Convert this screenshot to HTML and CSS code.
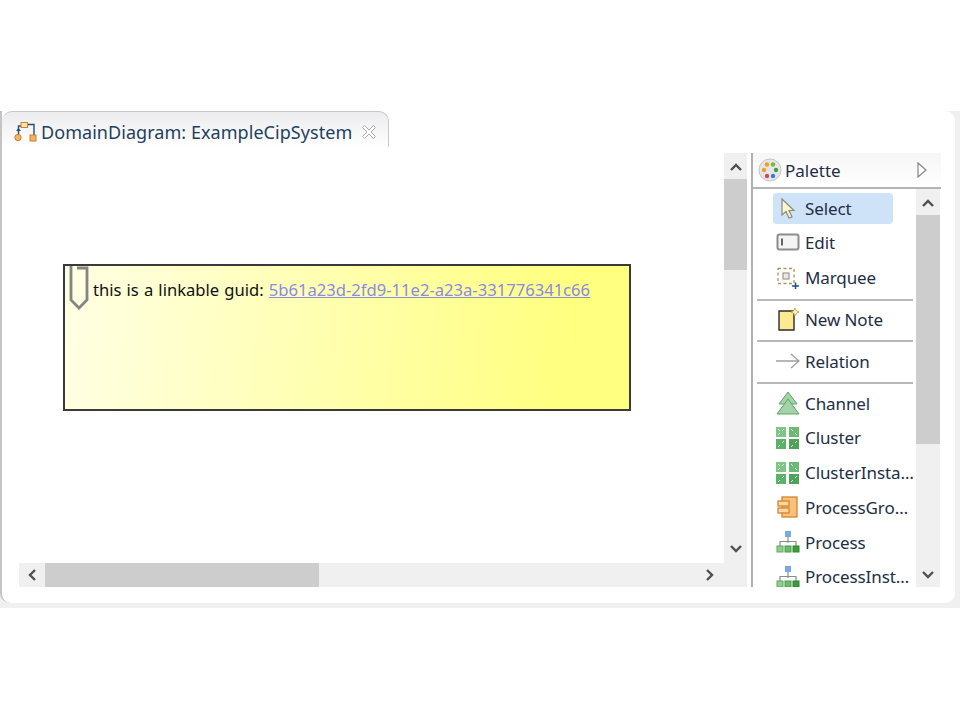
FILE: index.html
```html
<!DOCTYPE html>
<html lang="en">
<head>
<meta charset="utf-8">
<title>DomainDiagram: ExampleCipSystem</title>
<link rel="stylesheet" href="styles.css">
</head>
<body>
<div class="frame">
  <div class="tabbar">
    <div class="tab">
      <svg class="tab-icon" width="24" height="24" viewBox="0 0 24 24" fill="none"><path d="M5.500 14V6H8M14 4.500H21V16" stroke="#22507a" stroke-width="1.400"/><path d="M3 11L5.500 8L8 11Z" fill="#22507a"/><rect x="8" y="2.500" width="6.500" height="5" fill="#fbe3b4" stroke="#c8832c"/><circle cx="5" cy="17.500" r="3.200" fill="#f2b266" stroke="#c8832c"/><rect x="17" y="15" width="6" height="6" fill="#f2b266" stroke="#c8832c"/></svg>
      <span class="tab-title">DomainDiagram: ExampleCipSystem</span>
      <svg class="tab-close" width="16" height="16" viewBox="0 0 16 16" fill="#fff" stroke="#a8a8a8"><path d="M1.500 3.500L3.500 1.500L8 6L12.500 1.500L14.500 3.500L10 8L14.500 12.500L12.500 14.500L8 10L3.500 14.500L1.500 12.500L6 8Z"/></svg>
    </div>
  </div>
  <div class="workspace">
    <div class="editor">
      <div class="canvas-row">
        <div class="canvas">
          <div class="note">
            <svg class="clip" width="20" height="48" viewBox="0 0 20 48" fill="none"><path d="M2 0V34L10 42L18 34V2H8" stroke="#858585" stroke-width="2.800"/></svg>
            <p class="note-text">this is a linkable guid: <a class="guid" href="#">5b61a23d-2fd9-11e2-a23a-331776341c66</a></p>
          </div>
        </div>
        <div class="vscroll editor-v">
          <svg class="arrow" width="12" height="8" viewBox="0 0 12 8" fill="none"><path d="M1 7L6 2L11 7" stroke="#505050" stroke-width="2.400"/></svg>
          <div class="thumb-v editor-thumb"></div>
          <div class="spacer"></div>
          <svg class="arrow" width="12" height="8" viewBox="0 0 12 8" fill="none"><path d="M1 1L6 6L11 1" stroke="#505050" stroke-width="2.400"/></svg>
        </div>
      </div>
      <div class="hscroll">
        <svg class="arrow-h" width="8" height="12" viewBox="0 0 8 12" fill="none"><path d="M7 1L2 6L7 11" stroke="#505050" stroke-width="2.400"/></svg>
        <div class="thumb-h"></div>
        <div class="spacer"></div>
        <svg class="arrow-h" width="8" height="12" viewBox="0 0 8 12" fill="none"><path d="M1 1L6 6L1 11" stroke="#505050" stroke-width="2.400"/></svg>
      </div>
    </div>
    <aside class="palette">
      <header class="palette-head">
        <svg class="palette-icon" width="24" height="24" viewBox="0 0 24 24"><circle cx="12" cy="12" r="11" fill="#e6e6ea" stroke="#c5c5cc"/><circle cx="9" cy="6.500" r="2.200" fill="#f0a020"/><circle cx="15" cy="6.500" r="2.200" fill="#7cb82a"/><circle cx="18" cy="12" r="2.200" fill="#3aa040"/><circle cx="6" cy="12" r="2.200" fill="#f0a020"/><circle cx="9" cy="18" r="2.200" fill="#d84a4a"/><circle cx="15" cy="18" r="2.200" fill="#3a7ad8"/></svg>
        <span class="palette-title">Palette</span>
        <svg class="collapse" width="10" height="16" viewBox="0 0 10 16" fill="#fff" stroke="#858585" stroke-width="1.200"><path d="M1 1L9 8L1 15Z"/></svg>
      </header>
      <div class="palette-body">
        <ul class="tools">
          <li class="tool selected"><span class="ico"><svg width="24" height="24" viewBox="0 0 24 24"><path d="M6 2V18L10 14.500L13 21L16 20L13 13.500H18Z" fill="#fbf6d0" stroke="#8a8a7a" stroke-width="1.200"/></svg></span>Select</li>
          <li class="tool"><span class="ico"><svg width="24" height="24" viewBox="0 0 24 24" fill="none"><rect x="1.500" y="3.500" width="21" height="15" rx="2" fill="#f4f4f4" stroke="#8c8c8c" stroke-width="2"/><path d="M6 7.500V14.500" stroke="#333" stroke-width="1.500"/></svg></span>Edit</li>
          <li class="tool"><span class="ico"><svg width="24" height="24" viewBox="0 0 24 24" fill="none"><rect x="2" y="2.500" width="16" height="15" stroke="#a89660" stroke-width="1.300" stroke-dasharray="3 2.500"/><rect x="7" y="7" width="6" height="6" fill="#efeadb" stroke="#999" stroke-width="1.200"/><path d="M19.500 16.500V23M16 20H23" stroke="#1f4f80" stroke-width="1.500"/></svg></span>Marquee</li>
          <li class="sep"></li>
          <li class="tool"><span class="ico"><svg width="24" height="24" viewBox="0 0 24 24"><path d="M3 3H18V22H3Z" fill="#fde98f" stroke="#2c2c2c" stroke-width="1.400"/><path d="M19 0L20.300 2.700L23 4L20.300 5.300L19 8L17.700 5.300L15 4L17.700 2.700Z" fill="#fff3c0" stroke="#c89a30" stroke-width="0.800"/></svg></span>New Note</li>
          <li class="sep"></li>
          <li class="tool"><span class="ico"><svg width="24" height="24" viewBox="0 0 24 24" fill="none"><path d="M0 12H23M15 5L23 12L15 19" stroke="#a0a0a0" stroke-width="1.400"/></svg></span>Relation</li>
          <li class="sep"></li>
          <li class="tool"><span class="ico"><svg width="24" height="24" viewBox="0 0 24 24"><path d="M12 1L21 13H3Z" fill="#a3d3a6" stroke="#5ba765"/><path d="M12 8L23 23H1Z" fill="#a3d3a6" stroke="#5ba765"/></svg></span>Channel</li>
          <li class="tool"><span class="ico"><svg width="24" height="24" viewBox="0 0 24 24" fill="#5cb067"><rect x="0" y="1" width="10" height="10" fill="#7fc587"/><rect x="13" y="1" width="10" height="10" fill="#6cb975"/><rect x="0" y="13" width="10" height="10"/><rect x="13" y="13" width="10" height="10" fill="#4fa25a"/><path d="M2 3L4 5M8 3L6 5M2 9L4 7M15 3L17 5M21 9L19 7M2 21L4 19M8 15L6 17M15 21L17 19M21 15L19 17" stroke="#d8f0da" stroke-width="0.900" fill="none"/></svg></span>Cluster</li>
          <li class="tool"><span class="ico"><svg width="24" height="24" viewBox="0 0 24 24" fill="#5cb067"><rect x="0" y="1" width="10" height="10" fill="#7fc587"/><rect x="13" y="1" width="10" height="10" fill="#6cb975"/><rect x="0" y="13" width="10" height="10"/><rect x="13" y="13" width="10" height="10" fill="#4fa25a"/><path d="M2 3L4 5M8 3L6 5M2 9L4 7M15 3L17 5M21 9L19 7M2 21L4 19M8 15L6 17M15 21L17 19M21 15L19 17" stroke="#d8f0da" stroke-width="0.900" fill="none"/></svg></span>ClusterInsta…</li>
          <li class="tool"><span class="ico"><svg width="24" height="24" viewBox="0 0 24 24"><rect x="6" y="2" width="15" height="20" fill="#f8c078" stroke="#d4842c" stroke-width="1.300"/><rect x="2" y="6" width="11" height="5" fill="#fbd8a4" stroke="#d4842c" stroke-width="1.300"/><rect x="2" y="13" width="11" height="5" fill="#fbd8a4" stroke="#d4842c" stroke-width="1.300"/></svg></span>ProcessGro…</li>
          <li class="tool"><span class="ico"><svg width="24" height="24" viewBox="0 0 24 24"><rect x="9" y="1" width="6" height="6" fill="#7aa8e0"/><path d="M12 7V13M4 16V11.500H20V16" fill="none" stroke="#8c8c8c" stroke-width="1.200"/><rect x="1" y="16" width="6" height="6" fill="#8fcf8f" stroke="#5aa85a"/><rect x="9" y="16" width="6" height="6" fill="#6cbb6c" stroke="#4a9a4a"/><rect x="17" y="16" width="6" height="6" fill="#3f9a3f" stroke="#2f882f"/></svg></span>Process</li>
          <li class="tool"><span class="ico"><svg width="24" height="24" viewBox="0 0 24 24"><rect x="9" y="1" width="6" height="6" fill="#7aa8e0"/><path d="M12 7V13M4 16V11.500H20V16" fill="none" stroke="#8c8c8c" stroke-width="1.200"/><rect x="1" y="16" width="6" height="6" fill="#8fcf8f" stroke="#5aa85a"/><rect x="9" y="16" width="6" height="6" fill="#6cbb6c" stroke="#4a9a4a"/><rect x="17" y="16" width="6" height="6" fill="#3f9a3f" stroke="#2f882f"/></svg></span>ProcessInst…</li>
        </ul>
        <div class="vscroll palette-v">
          <svg class="arrow" width="12" height="8" viewBox="0 0 12 8" fill="none"><path d="M1 7L6 2L11 7" stroke="#505050" stroke-width="2.400"/></svg>
          <div class="thumb-v palette-thumb"></div>
          <div class="spacer"></div>
          <svg class="arrow" width="12" height="8" viewBox="0 0 12 8" fill="none"><path d="M1 1L6 6L11 1" stroke="#505050" stroke-width="2.400"/></svg>
        </div>
      </div>
    </aside>
  </div>
</div>
</body>
</html>
```
FILE: styles.css
```css
* { box-sizing: border-box; }
html, body { margin: 0; height: 720px; background: #fff; overflow: hidden; }
body { padding-top: 111px; font-family: "Noto Sans", "Open Sans", sans-serif; color: #222; }
.frame { width: 960px; height: 497px; display: flex; flex-direction: column; background: #f0f0f0; padding: 0 5px 5px 0; }
.tabbar { height: 36px; flex: none; display: flex; background: #fff; border-radius: 0 10px 0 0; border-left: 2px solid #c4c4c4; }
.tab { width: 387px; height: 36px; display: flex; align-items: center; padding: 5px 0 0 11px; border: 1px solid #c8c8d0; border-bottom: 0; border-left: 0; border-radius: 10px 10px 0 0; background: linear-gradient(#ececee, #fff); }
.tab-icon { flex: none; }
.tab-title { margin-left: 4px; font-size: 18px; letter-spacing: 0.050px; color: #1f3f60; white-space: nowrap; }
.tab-close { margin-left: 9px; flex: none; }
.workspace { flex: 1; min-height: 0; display: flex; background: #fff; border-left: 2px solid #c4c4c4; border-radius: 0 0 10px 10px; padding: 6px 14px 16px 17px; }
.editor { width: 732px; flex: none; display: flex; flex-direction: column; }
.canvas-row { flex: 1; min-height: 0; display: flex; }
.canvas { flex: 1; padding: 111px 0 0 44px; }
.note { width: 568px; height: 147px; display: flex; align-items: flex-start; border: 2px solid #3a3a3a; background: linear-gradient(95deg, #ffffe4, #ffff80 88%); }
.clip { flex: none; margin: 0 0 0 4px; }
.note-text { margin: 13px 0 0 4px; font-size: 16.600px; word-spacing: 0.800px; line-height: 22px; color: #111; white-space: nowrap; }
.guid { color: #8a8ae8; text-decoration: underline; }
.vscroll { display: flex; flex-direction: column; align-items: center; background: #f0f0f0; }
.editor-v { width: 23px; padding: 10px 0; margin-right: 4px; }
.arrow { flex: none; margin-bottom: 8px; }
.arrow:last-child { margin-bottom: 0; }
.spacer { flex: 1; }
.thumb-v { width: 100%; background: #cdcdcd; }
.editor-thumb { height: 91px; }
.hscroll { height: 24px; flex: none; margin-right: 4px; display: flex; align-items: center; background: #f0f0f0; padding: 0 33px 0 9px; }
.arrow-h { flex: none; }
.thumb-h { width: 274px; height: 100%; margin-left: 9px; background: #cdcdcd; }
.palette { width: 190px; flex: none; display: flex; flex-direction: column; border-left: 2px solid #b0b0b0; }
.palette-head { height: 36px; flex: none; display: flex; align-items: center; padding: 0 14px 0 5px; background: linear-gradient(#f6f6f6, #fff); border-bottom: 2px solid #b4b4b4; }
.palette-icon { flex: none; }
.palette-title { margin-left: 3px; font-size: 17px; color: #1e2e44; }
.collapse { margin-left: auto; }
.palette-body { flex: 1; min-height: 0; display: flex; overflow: hidden; }
.tools { list-style: none; margin: 0; padding: 4px 3px 0 4px; width: 163px; flex: none; }
.tool { height: 34.700px; display: flex; align-items: center; padding-left: 19px; font-size: 17px; letter-spacing: -0.100px; color: #1e2e44; white-space: nowrap; }
.tool.selected { height: 31px; margin: 0 20px 1.600px 16px; padding-left: 3px; border-radius: 4px; background: #cfe3f8; }
.ico { width: 24px; height: 24px; flex: none; margin-right: 5px; display: block; }
.sep { height: 2px; margin: 3.600px 0 1.600px; background: #b8b8b8; }
.palette-v { width: 24px; padding: 10px 0 8px; }
.palette-thumb { height: 229px; }
```
